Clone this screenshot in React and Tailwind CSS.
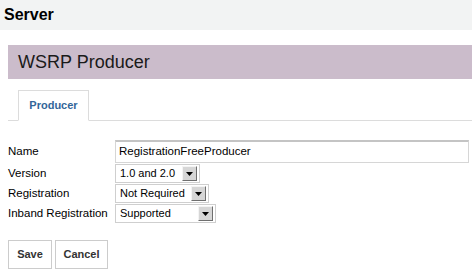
import React from 'react';

function Arrow() {
    return (
        <span className="flex h-[15px] w-[15px] items-center justify-center border border-t-[#f4f4f4] border-l-[#f4f4f4] border-r-[#6f6f6f] border-b-[#6f6f6f] bg-[#d6d6d6]">
            <svg width="7" height="4" viewBox="0 0 7 4">
                <path d="M0 0H7L3.5 4Z" fill="#000" />
            </svg>
        </span>
    );
}

function Select({ value, width }) {
    return (
        <div className={`flex h-[19px] items-center justify-between border border-[#cfcfcf] bg-white pl-[4px] pr-[2px] ${width}`}>
            <span className="text-[11px] leading-none text-black">{value}</span>
            <Arrow />
        </div>
    );
}

const rows = [
    { label: 'Version', value: '1.0 and 2.0', width: 'w-[85px]' },
    { label: 'Registration', value: 'Not Required', width: 'w-[94px]' },
    { label: 'Inband Registration', value: 'Supported', width: 'w-[101px]' },
];

export default function App() {
    return (
        <div className="h-[270px] w-[472px] overflow-hidden bg-white font-['Liberation_Sans',Arial,sans-serif]">
            {/* page title */}
            <div className="flex h-[30px] items-center bg-[#f2f3f3] px-[4px]">
                <h1 className="text-[16px] font-bold text-black">Server</h1>
            </div>

            <div className="pl-[8px] pt-[15px]">
                <div className="flex h-[34px] items-center bg-[#cbbccb] pl-[10px]">
                    <h2 className="text-[18px] text-[#1a1a1a]">WSRP Producer</h2>
                </div>

                {/* tabs */}
                <div className="mt-[11px] flex border-b border-[#dcdcdc] pl-[10px]">
                    <div className="-mb-px flex h-[31px] w-[71px] items-center justify-center border border-b-white border-[#dcdcdc] bg-white">
                        <span className="text-[11px] font-bold text-[#336699]">Producer</span>
                    </div>
                </div>

                {/* form */}
                <div className="mt-[19px] flex flex-col gap-[1px] text-[11.5px] text-black">
                    <div className="flex items-center">
                        <label className="w-[107px]">Name</label>
                        <div className="flex h-[23px] w-[354px] items-center border border-[#d6d6d6] border-t-2 border-t-[#c4c4c4] bg-white pl-[3px]">
                            RegistrationFreeProducer
                        </div>
                    </div>
                    {rows.map((r) => (
                        <div key={r.label} className="flex items-center">
                            <label className="w-[107px]">{r.label}</label>
                            <Select value={r.value} width={r.width} />
                        </div>
                    ))}
                </div>

                <div className="mt-[17px] flex gap-[3px]">
                    <button className="h-[29px] w-[44px] border border-[#cccccc] bg-white text-[11px] font-bold text-[#333]">
                        Save
                    </button>
                    <button className="h-[29px] w-[53px] border border-[#cccccc] bg-white text-[11px] font-bold text-[#333]">
                        Cancel
                    </button>
                </div>
            </div>
        </div>
    );
}
